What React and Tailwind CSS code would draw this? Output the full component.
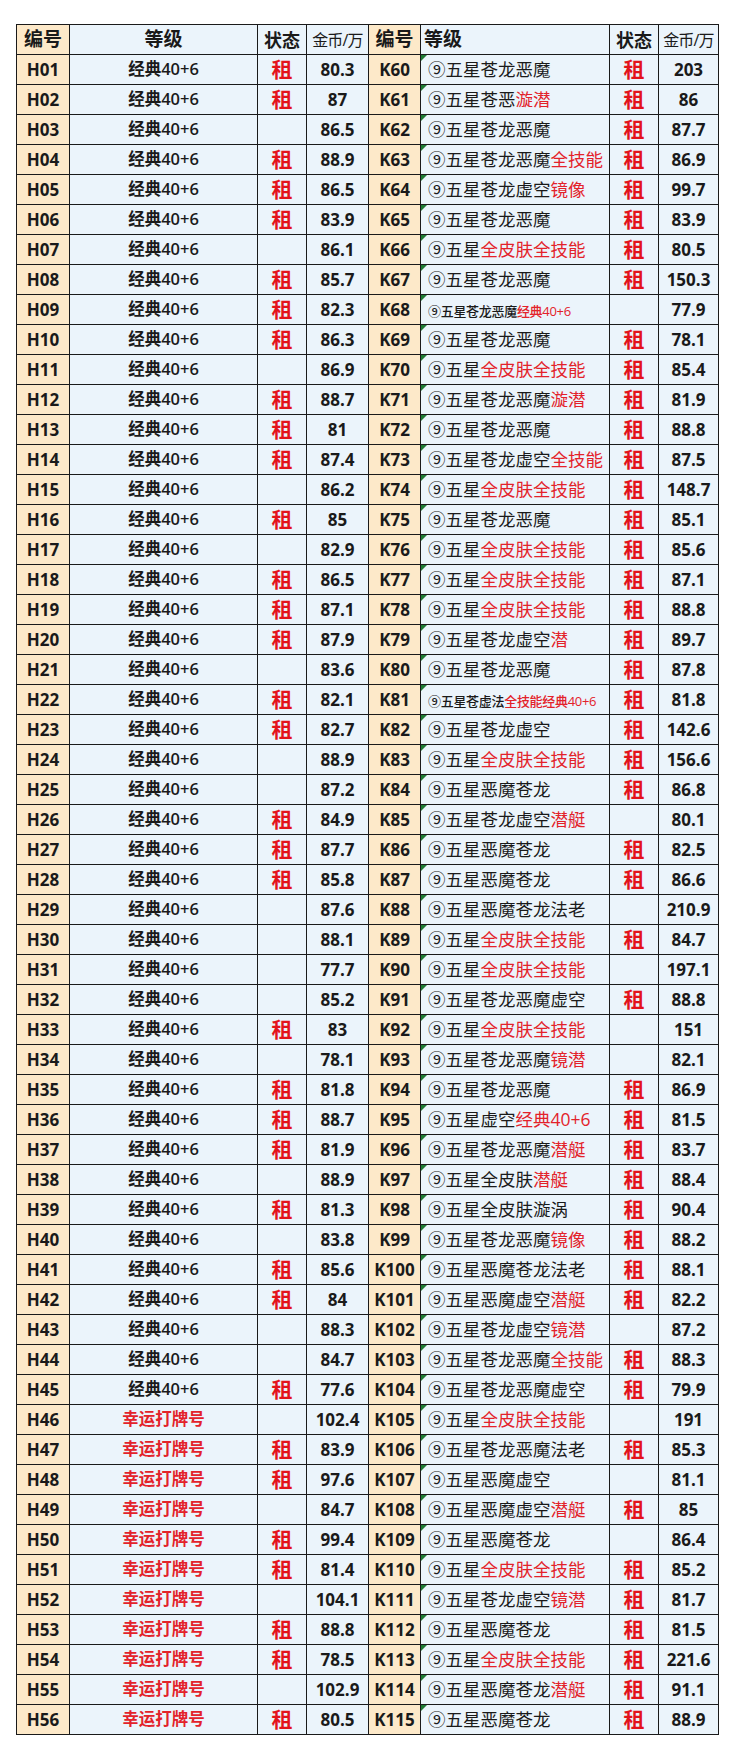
const left = [
  ["H01", 0, 1, "80.3"], ["H02", 0, 1, "87"], ["H03", 0, 0, "86.5"], ["H04", 0, 1, "88.9"],
  ["H05", 0, 1, "86.5"], ["H06", 0, 1, "83.9"], ["H07", 0, 0, "86.1"], ["H08", 0, 1, "85.7"],
  ["H09", 0, 1, "82.3"], ["H10", 0, 1, "86.3"], ["H11", 0, 0, "86.9"], ["H12", 0, 1, "88.7"],
  ["H13", 0, 1, "81"], ["H14", 0, 1, "87.4"], ["H15", 0, 0, "86.2"], ["H16", 0, 1, "85"],
  ["H17", 0, 0, "82.9"], ["H18", 0, 1, "86.5"], ["H19", 0, 1, "87.1"], ["H20", 0, 1, "87.9"],
  ["H21", 0, 0, "83.6"], ["H22", 0, 1, "82.1"], ["H23", 0, 1, "82.7"], ["H24", 0, 0, "88.9"],
  ["H25", 0, 0, "87.2"], ["H26", 0, 1, "84.9"], ["H27", 0, 1, "87.7"], ["H28", 0, 1, "85.8"],
  ["H29", 0, 0, "87.6"], ["H30", 0, 0, "88.1"], ["H31", 0, 0, "77.7"], ["H32", 0, 0, "85.2"],
  ["H33", 0, 1, "83"], ["H34", 0, 0, "78.1"], ["H35", 0, 1, "81.8"], ["H36", 0, 1, "88.7"],
  ["H37", 0, 1, "81.9"], ["H38", 0, 0, "88.9"], ["H39", 0, 1, "81.3"], ["H40", 0, 0, "83.8"],
  ["H41", 0, 1, "85.6"], ["H42", 0, 1, "84"], ["H43", 0, 0, "88.3"], ["H44", 0, 0, "84.7"],
  ["H45", 0, 1, "77.6"], ["H46", 1, 0, "102.4"], ["H47", 1, 1, "83.9"], ["H48", 1, 1, "97.6"],
  ["H49", 1, 0, "84.7"], ["H50", 1, 1, "99.4"], ["H51", 1, 1, "81.4"], ["H52", 1, 0, "104.1"],
  ["H53", 1, 1, "88.8"], ["H54", 1, 1, "78.5"], ["H55", 1, 0, "102.9"], ["H56", 1, 1, "80.5"],
];

// name: black part | red part ; "s" = small text
const right = [
  ["K60", "⑨五星苍龙恶魔", 1, "203"], ["K61", "⑨五星苍恶|漩潜", 1, "86"],
  ["K62", "⑨五星苍龙恶魔", 1, "87.7"], ["K63", "⑨五星苍龙恶魔|全技能", 1, "86.9"],
  ["K64", "⑨五星苍龙虚空|镜像", 1, "99.7"], ["K65", "⑨五星苍龙恶魔", 1, "83.9"],
  ["K66", "⑨五星|全皮肤全技能", 1, "80.5"], ["K67", "⑨五星苍龙恶魔", 1, "150.3"],
  ["K68", "⑨五星苍龙恶魔|经典40+6", 0, "77.9", "s"], ["K69", "⑨五星苍龙恶魔", 1, "78.1"],
  ["K70", "⑨五星|全皮肤全技能", 1, "85.4"], ["K71", "⑨五星苍龙恶魔|漩潜", 1, "81.9"],
  ["K72", "⑨五星苍龙恶魔", 1, "88.8"], ["K73", "⑨五星苍龙虚空|全技能", 1, "87.5"],
  ["K74", "⑨五星|全皮肤全技能", 1, "148.7"], ["K75", "⑨五星苍龙恶魔", 1, "85.1"],
  ["K76", "⑨五星|全皮肤全技能", 1, "85.6"], ["K77", "⑨五星|全皮肤全技能", 1, "87.1"],
  ["K78", "⑨五星|全皮肤全技能", 1, "88.8"], ["K79", "⑨五星苍龙虚空|潜", 1, "89.7"],
  ["K80", "⑨五星苍龙恶魔", 1, "87.8"], ["K81", "⑨五星苍虚法|全技能经典40+6", 1, "81.8", "s"],
  ["K82", "⑨五星苍龙虚空", 1, "142.6"], ["K83", "⑨五星|全皮肤全技能", 1, "156.6"],
  ["K84", "⑨五星恶魔苍龙", 1, "86.8"], ["K85", "⑨五星苍龙虚空|潜艇", 0, "80.1"],
  ["K86", "⑨五星恶魔苍龙", 1, "82.5"], ["K87", "⑨五星恶魔苍龙", 1, "86.6"],
  ["K88", "⑨五星恶魔苍龙法老", 0, "210.9"], ["K89", "⑨五星|全皮肤全技能", 1, "84.7"],
  ["K90", "⑨五星|全皮肤全技能", 0, "197.1"], ["K91", "⑨五星苍龙恶魔虚空", 1, "88.8"],
  ["K92", "⑨五星|全皮肤全技能", 0, "151"], ["K93", "⑨五星苍龙恶魔|镜潜", 0, "82.1"],
  ["K94", "⑨五星苍龙恶魔", 1, "86.9"], ["K95", "⑨五星虚空|经典40+6", 1, "81.5"],
  ["K96", "⑨五星苍龙恶魔|潜艇", 1, "83.7"], ["K97", "⑨五星全皮肤|潜艇", 1, "88.4"],
  ["K98", "⑨五星全皮肤漩涡", 1, "90.4"], ["K99", "⑨五星苍龙恶魔|镜像", 1, "88.2"],
  ["K100", "⑨五星恶魔苍龙法老", 1, "88.1"], ["K101", "⑨五星恶魔虚空|潜艇", 1, "82.2"],
  ["K102", "⑨五星苍龙虚空|镜潜", 0, "87.2"], ["K103", "⑨五星苍龙恶魔|全技能", 1, "88.3"],
  ["K104", "⑨五星苍龙恶魔虚空", 1, "79.9"], ["K105", "⑨五星|全皮肤全技能", 0, "191"],
  ["K106", "⑨五星苍龙恶魔法老", 1, "85.3"], ["K107", "⑨五星恶魔虚空", 0, "81.1"],
  ["K108", "⑨五星恶魔虚空|潜艇", 1, "85"], ["K109", "⑨五星恶魔苍龙", 0, "86.4"],
  ["K110", "⑨五星|全皮肤全技能", 1, "85.2"], ["K111", "⑨五星苍龙虚空|镜潜", 1, "81.7"],
  ["K112", "⑨五星恶魔苍龙", 1, "81.5"], ["K113", "⑨五星|全皮肤全技能", 1, "221.6"],
  ["K114", "⑨五星恶魔苍龙|潜艇", 1, "91.1"], ["K115", "⑨五星恶魔苍龙", 1, "88.9"],
];

const font = { fontFamily: '"Open Sans", "Noto Sans CJK SC", sans-serif' };

const cell = "border border-[#1a1a1a] h-[30px] p-0 leading-none";
const peach = "bg-[#fde9c9]";
const blue = "bg-[#ebf4fb]";

const Rent = ({ on }) =>
  on ? <span className="text-[21px] font-bold text-[#e3131b]">租</span> : null;

const Grade = ({ text, small }) => {
  const [black, red] = text.split("|");
  return (
    <span className={small ? "text-[13px] font-medium tracking-[-0.3px]" : "text-[17.5px]"}>
      <span className="text-[#1a1a1a]">{black}</span>
      {red && <span className="text-[#e3222a]">{red}</span>}
    </span>
  );
};

export default function App() {
  return (
    <div className="min-h-[1751px] bg-white pl-[16px] pt-[24px]" style={font}>
      <table className="w-[702px] table-fixed border-collapse text-[#1a1a1a]">
        <colgroup>
          <col className="w-[53px]" />
          <col className="w-[188px]" />
          <col className="w-[49px]" />
          <col className="w-[62px]" />
          <col className="w-[52px]" />
          <col className="w-[189px]" />
          <col className="w-[49px]" />
          <col className="w-[60px]" />
        </colgroup>
        <thead>
          <tr>
            <th className={`${cell} ${peach} text-[19px] font-bold`}>编号</th>
            <th className={`${cell} ${blue} text-[19px] font-bold`}>等级</th>
            <th className={`${cell} ${blue} text-[18px] font-bold`}>状态</th>
            <th className={`${cell} ${blue} text-[16px] font-normal tracking-[-0.8px]`}>金币/万</th>
            <th className={`${cell} ${peach} text-[19px] font-bold`}>编号</th>
            <th className={`${cell} ${blue} pl-[3px] text-left text-[19px] font-bold`}>等级</th>
            <th className={`${cell} ${blue} text-[18px] font-bold`}>状态</th>
            <th className={`${cell} ${blue} text-[16px] font-normal tracking-[-0.8px]`}>金币/万</th>
          </tr>
        </thead>
        <tbody>
          {left.map((l, i) => {
            const r = right[i];
            return (
              <tr key={l[0]}>
                <td className={`${cell} ${peach} text-center text-[17px] font-bold`}>{l[0]}</td>
                <td
                  className={`${cell} ${blue} text-center text-[16.5px] font-semibold ${
                    l[1] ? "text-[#e3222a]" : ""
                  }`}
                >
                  {l[1] ? "幸运打牌号" : "经典40+6"}
                </td>
                <td className={`${cell} ${blue} text-center`}>
                  <Rent on={l[2]} />
                </td>
                <td className={`${cell} ${blue} text-center text-[17px] font-bold`}>{l[3]}</td>
                <td className={`${cell} ${peach} text-center text-[17px] font-bold`}>{r[0]}</td>
                <td className={`${cell} ${blue} relative whitespace-nowrap pl-[7px] text-left`}>
                  <span className="absolute left-0 top-0 h-0 w-0 border-r-[6px] border-t-[6px] border-r-transparent border-t-[#1f7a34]" />
                  <Grade text={r[1]} small={r[4]} />
                </td>
                <td className={`${cell} ${blue} text-center`}>
                  <Rent on={r[2]} />
                </td>
                <td className={`${cell} ${blue} text-center text-[17px] font-bold`}>{r[3]}</td>
              </tr>
            );
          })}
        </tbody>
      </table>
    </div>
  );
}
